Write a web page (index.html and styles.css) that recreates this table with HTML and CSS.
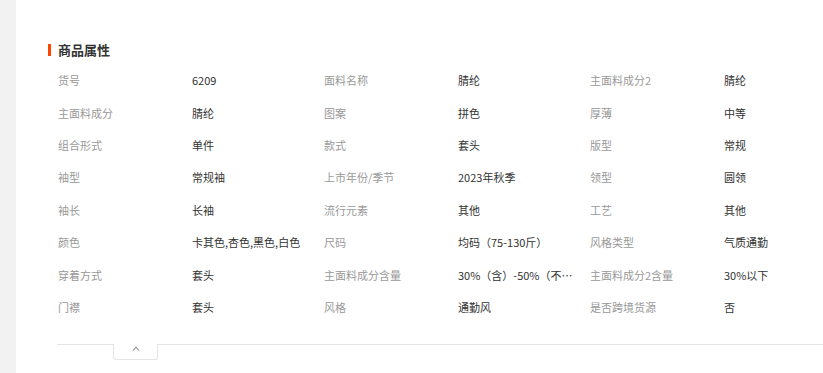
FILE: index.html
```html
<!DOCTYPE html>
<html lang="zh-CN">
<head>
<meta charset="utf-8">
<title>商品属性</title>
<link rel="stylesheet" href="styles.css">
</head>
<body>
<div class="page">
  <div class="side"></div>
  <div class="main">
    <div class="title"><span class="bar"></span><h2>商品属性</h2></div>
    <div class="grid">
      <div class="k">货号</div><div class="v">6209</div>
      <div class="k">面料名称</div><div class="v">腈纶</div>
      <div class="k">主面料成分2</div><div class="v">腈纶</div>

      <div class="k">主面料成分</div><div class="v">腈纶</div>
      <div class="k">图案</div><div class="v">拼色</div>
      <div class="k">厚薄</div><div class="v">中等</div>

      <div class="k">组合形式</div><div class="v">单件</div>
      <div class="k">款式</div><div class="v">套头</div>
      <div class="k">版型</div><div class="v">常规</div>

      <div class="k">袖型</div><div class="v">常规袖</div>
      <div class="k">上市年份/季节</div><div class="v">2023年秋季</div>
      <div class="k">领型</div><div class="v">圆领</div>

      <div class="k">袖长</div><div class="v">长袖</div>
      <div class="k">流行元素</div><div class="v">其他</div>
      <div class="k">工艺</div><div class="v">其他</div>

      <div class="k">颜色</div><div class="v">卡其色,杏色,黑色,白色</div>
      <div class="k">尺码</div><div class="v">均码（75-130斤）</div>
      <div class="k">风格类型</div><div class="v">气质通勤</div>

      <div class="k">穿着方式</div><div class="v">套头</div>
      <div class="k">主面料成分含量</div><div class="v"><span class="clip">30%（含）-50%（不…</span></div>
      <div class="k">主面料成分2含量</div><div class="v">30%以下</div>

      <div class="k">门襟</div><div class="v">套头</div>
      <div class="k">风格</div><div class="v">通勤风</div>
      <div class="k">是否跨境货源</div><div class="v">否</div>
    </div>
    <div class="divider">
      <div class="toggle">
        <svg class="caret" width="8" height="5" viewBox="0 0 8 5"><path d="M1 4.5 L4 1.2 L7 4.5" fill="none" stroke="#8a8a8a" stroke-width="1.1"/></svg>
      </div>
    </div>
  </div>
</div>
</body>
</html>
```

FILE: styles.css
```css
html, body {
  margin: 0;
  padding: 0;
  background: #ffffff;
  overflow: hidden;
}
body {
  font-family: "Noto Sans CJK SC", "Noto Sans", sans-serif;
  font-size: 11px;
  color: #333333;
}
.page {
  display: flex;
  width: 823px;
  height: 373px;
  overflow: hidden;
}
.side {
  width: 16px;
  flex: none;
  background: #f2f2f2;
}
.main {
  flex: 1;
  min-width: 0;
  padding: 43px 0 0 32px;
  box-sizing: border-box;
  overflow: hidden;
}
.title {
  display: flex;
  align-items: center;
  height: 14px;
}
.bar {
  width: 3px;
  height: 12px;
  background: #ff4400;
  margin-right: 7px;
}
.title h2 {
  margin: 0;
  font-size: 13px;
  font-weight: 700;
  line-height: 14px;
  color: #333333;
}
.grid {
  display: grid;
  grid-template-columns: 134px 132px 134px 132px 134px 132px;
  grid-auto-rows: 32.43px;
  margin-top: 7px;
  padding-left: 10px;
  width: max-content;
}
.k, .v {
  display: flex;
  align-items: center;
  white-space: nowrap;
  line-height: 16px;
}
.k {
  color: #999999;
}
.v {
  color: #333333;
}
.clip {
  white-space: nowrap;
}
.divider {
  position: relative;
  margin: 21px 0 0 9px;
  border-top: 1px solid #e5e5e5;
  height: 0;
}
.toggle {
  position: absolute;
  left: 56px;
  top: -1px;
  width: 45px;
  height: 16px;
  background: #ffffff;
  border: 1px solid #e5e5e5;
  border-top: none;
  border-radius: 0 0 3px 3px;
  display: flex;
  justify-content: center;
  padding-top: 2px;
  box-sizing: border-box;
}
.caret {
  display: block;
}
```
